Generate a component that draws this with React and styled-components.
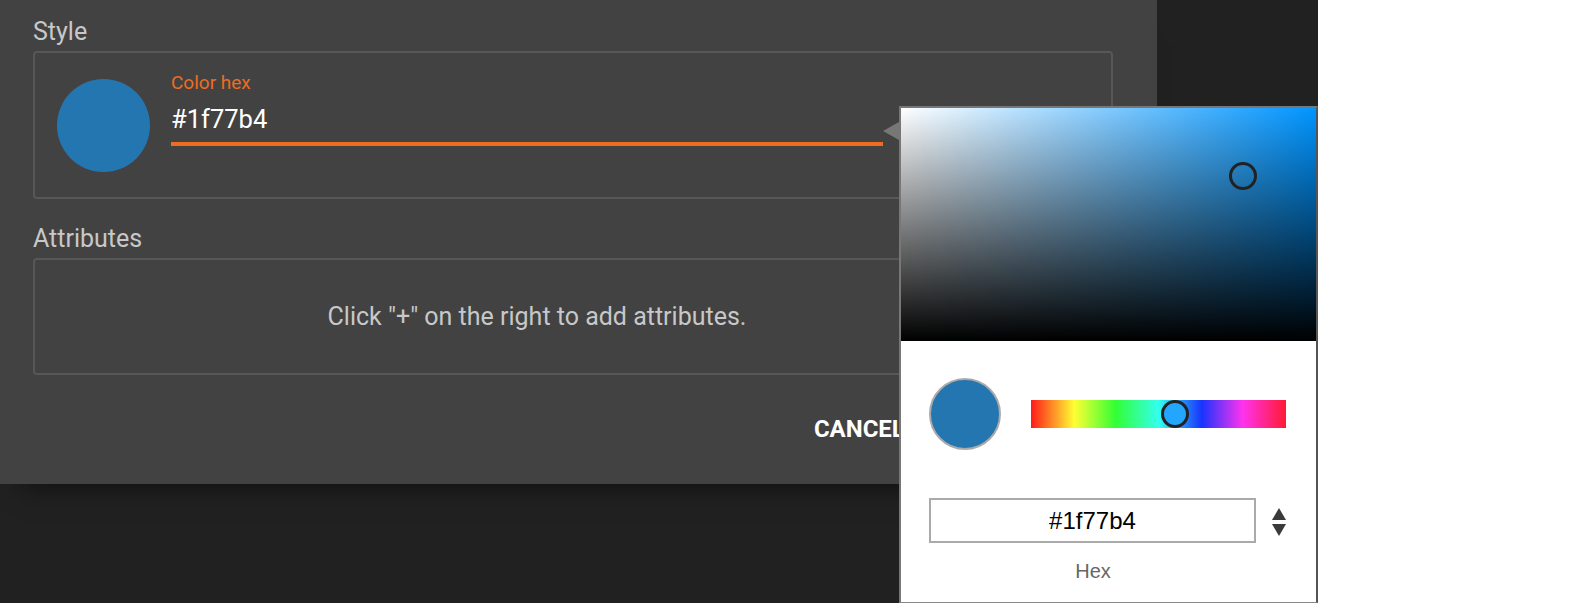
import React from 'react';
import styled, { createGlobalStyle } from 'styled-components';

const Global = createGlobalStyle`
  html, body { margin: 0; padding: 0; background: #ffffff; }
  body { font-family: Roboto, "Liberation Sans", sans-serif; }
  * { box-sizing: border-box; }
`;

const Stage = styled.div`
  position: relative;
  width: 1318px;
  height: 603px;
  background: #212121;
`;

const Dialog = styled.div`
  width: 1157px;
  height: 484px;
  background: #424242;
  padding: 17px 44px 0 33px;
  display: flex;
  flex-direction: column;
  box-shadow: 0 24px 24px -20px rgba(0, 0, 0, 0.5);
`;

const SectionLabel = styled.div`
  font: 400 25px/30px Roboto, sans-serif;
  color: #c8c8c8;
  margin-top: ${p => p.$mt || 0}px;
  margin-bottom: 4px;
`;

const StyleBox = styled.div`
  height: 148px;
  border: 2px solid #575757;
  border-radius: 4px;
  padding: 0 22px;
  display: flex;
  align-items: center;
`;

const Swatch = styled.div`
  width: ${p => p.$size}px;
  height: ${p => p.$size}px;
  border-radius: 50%;
  background: #2476b1;
  flex: none;
  border: ${p => (p.$outlined ? '2px solid #aaaaaa' : 'none')};
`;

const Field = styled.div`
  align-self: flex-start;
  margin-top: 19px;
  margin-left: 21px;
  width: 712px;
  display: flex;
  flex-direction: column;
`;

const FieldLabel = styled.label`
  font: 400 19px/22px Roboto, sans-serif;
  color: #ee6c1f;
`;

const FieldInput = styled.input`
  margin-top: 10px;
  height: 30px;
  padding: 0;
  border: none;
  outline: none;
  background: transparent;
  font: 400 25.5px/30px Roboto, sans-serif;
  color: #ffffff;
`;

const Underline = styled.div`
  margin-top: 8px;
  height: 4px;
  background: #ee6c1f;
`;

const AttrBox = styled.div`
  height: 117px;
  border: 2px solid #575757;
  border-radius: 4px;
  padding-right: 72px;
  display: flex;
  align-items: center;
  justify-content: center;
  font: 400 25px/30px Roboto, sans-serif;
  color: #c8c8c8;
`;

const Actions = styled.div`
  margin-top: 36px;
  display: flex;
  justify-content: flex-end;
  gap: 12px;
  padding-right: 101px;
`;

const TextButton = styled.button`
  border: none;
  background: transparent;
  padding: 0 12px;
  font: 700 24px/36px Roboto, sans-serif;
  color: #ffffff;
  text-transform: uppercase;
`;

const Popover = styled.div`
  position: absolute;
  left: 899px;
  top: 106px;
  width: 419px;
  height: 497px;
  background: #ffffff;
  border: 2px solid #777777;
  border-right-color: #555555;
  border-bottom-width: 1px;
  border-bottom-color: #888888;
`;

const Arrow = styled.div`
  position: absolute;
  left: -18px;
  top: 14px;
  width: 0;
  height: 0;
  border-top: 9px solid transparent;
  border-bottom: 9px solid transparent;
  border-right: 16px solid #777777;
`;

const Saturation = styled.div`
  position: relative;
  height: 233px;
  background: linear-gradient(to top, #000000, rgba(0, 0, 0, 0)),
    linear-gradient(to right, #ffffff, hsl(205, 100%, 50%));
`;

const Pointer = styled.div`
  position: absolute;
  width: 28px;
  height: 28px;
  border-radius: 50%;
  border: 3.5px solid #222222;
  background: ${p => p.$fill || 'transparent'};
`;

const PickerBody = styled.div`
  padding: 37px 30px 0 28px;
`;

const PreviewRow = styled.div`
  display: flex;
  align-items: center;
  gap: 30px;
`;

const HueBar = styled.div`
  position: relative;
  flex: 1;
  height: 28px;
  background: linear-gradient(
    to right,
    #ff1a1a 0%,
    #ffff33 17%,
    #33ff33 33%,
    #33ffee 50%,
    #1a33ff 67%,
    #ff33ee 83%,
    #ff1a33 100%
  );
`;

const HexRow = styled.div`
  margin-top: 48px;
  display: flex;
  align-items: center;
`;

const HexInput = styled.input`
  width: 328px;
  height: 45px;
  border: 2px solid #aaaaaa;
  outline: none;
  padding: 0;
  text-align: center;
  font: 400 24px "Liberation Sans", Arial, sans-serif;
  color: #000000;
  background: #ffffff;
`;

const Spinner = styled.div`
  margin-left: 16px;
  margin-top: 3px;
  display: flex;
`;

const HexCaption = styled.div`
  width: 328px;
  margin-top: 16px;
  text-align: center;
  font: 400 20px/24px "Liberation Sans", Arial, sans-serif;
  color: #666666;
`;

export default function App() {
  return (
    <>
      <Global />
      <Stage>
        <Dialog>
          <SectionLabel>Style</SectionLabel>
          <StyleBox>
            <Swatch $size={93} />
            <Field>
              <FieldLabel>Color hex</FieldLabel>
              <FieldInput readOnly value="#1f77b4" />
              <Underline />
            </Field>
          </StyleBox>
          <SectionLabel $mt={25}>Attributes</SectionLabel>
          <AttrBox>Click "+" on the right to add attributes.</AttrBox>
          <Actions>
            <TextButton>Cancel</TextButton>
            <TextButton>Save</TextButton>
          </Actions>
        </Dialog>
        <Popover>
          <Arrow />
          <Saturation>
            <Pointer style={{ left: 328, top: 54 }} />
          </Saturation>
          <PickerBody>
            <PreviewRow>
              <Swatch $size={72} $outlined />
              <HueBar>
                <Pointer $fill="#23a6fd" style={{ left: 130, top: 0 }} />
              </HueBar>
            </PreviewRow>
            <HexRow>
              <HexInput readOnly value="#1f77b4" />
              <Spinner>
                <svg width="14" height="28" viewBox="0 0 14 28">
                  <path d="M7 0 L14 12 L0 12 Z" fill="#3a3a3a" />
                  <path d="M0 16 L14 16 L7 28 Z" fill="#3a3a3a" />
                </svg>
              </Spinner>
            </HexRow>
            <HexCaption>Hex</HexCaption>
          </PickerBody>
        </Popover>
      </Stage>
    </>
  );
}
